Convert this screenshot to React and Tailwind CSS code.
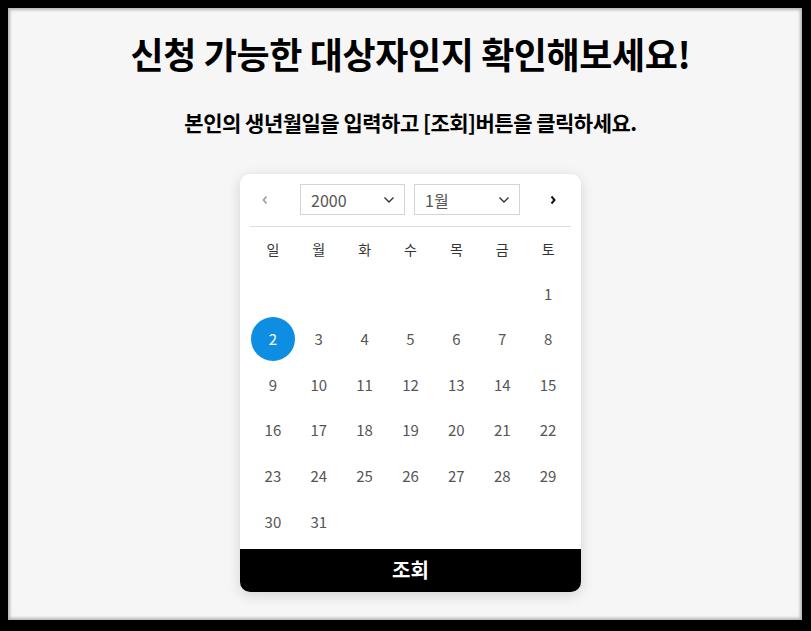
import React from "react";

const font = { fontFamily: '"Noto Sans CJK KR", "Noto Sans", sans-serif' };

const weekdays = ["일", "월", "화", "수", "목", "금", "토"];

// January 2000 starts on Saturday
const cells = [
  ...Array(6).fill(null),
  ...Array.from({ length: 31 }, (_, i) => i + 1),
];
while (cells.length % 7) cells.push(null);

function ChevronDown() {
  return (
    <svg width="12" height="8" viewBox="0 0 12 8" fill="none">
      <path d="M1.5 1.5L6 6L10.5 1.5" stroke="#333" strokeWidth="1.4" />
    </svg>
  );
}

function Select({ value, width }) {
  return (
    <div
      className={`flex h-[31px] items-center justify-between border border-[#d4d4d4] bg-white pl-[10px] pr-[9px] text-[16px] text-[#555] ${width}`}
    >
      <span>{value}</span>
      <ChevronDown />
    </div>
  );
}

export default function App() {
  return (
    <div className="h-[631px] w-full bg-black" style={font}>
      <div className="ml-[8px] mr-[9px] h-[612px] translate-y-[8px] bg-[#f6f6f6] shadow-[inset_0_0_3px_2px_#b5b5b5]">
        <div className="flex flex-col items-center pl-[11px] pt-[21px]">
          <h1 className="text-[36px] font-bold leading-[48px] tracking-[-0.4px] text-black">
            신청 가능한 대상자인지 확인해보세요!
          </h1>
          <p className="mt-[31px] text-[21px] font-bold leading-[28px] tracking-[-0.5px] text-black">
            본인의 생년월일을 입력하고 [조회]버튼을 클릭하세요.
          </p>

          <div className="mt-[38px] w-[341px] overflow-hidden rounded-[10px] bg-white shadow-[0_3px_14px_rgba(0,0,0,0.14)]">
            <div className="px-[10px] pt-[10px]">
              <div className="flex items-center border-b border-[#dcdcdc] pb-[11px]">
                <button className="flex h-[31px] w-[30px] items-center justify-center">
                  <svg width="8" height="10" viewBox="0 0 8 10" fill="none">
                    <path d="M5.5 1.5L2.5 5L5.5 8.5" stroke="#a0a0a0" strokeWidth="1.8" />
                  </svg>
                </button>
                <div className="ml-[20px] flex gap-[9px]">
                  <Select value="2000" width="w-[105px]" />
                  <Select value="1월" width="w-[106px]" />
                </div>
                <button className="ml-auto mr-[8px] flex h-[31px] w-[20px] items-center justify-center">
                  <svg width="8" height="10" viewBox="0 0 8 10" fill="none">
                    <path d="M2.5 1.5L5.5 5L2.5 8.5" stroke="#111" strokeWidth="2" />
                  </svg>
                </button>
              </div>

              <div className="grid grid-cols-7">
                {weekdays.map((d) => (
                  <div
                    key={d}
                    className="flex h-[44px] items-center justify-center text-[14px] text-[#333]"
                  >
                    {d}
                  </div>
                ))}
                {cells.map((n, i) => (
                  <div
                    key={i}
                    className="flex h-[45.6px] items-center justify-center text-[15px] text-[#555]"
                  >
                    {n === 2 ? (
                      <span className="flex h-[44px] w-[44px] items-center justify-center rounded-full bg-[#0d8ee3] text-white">
                        2
                      </span>
                    ) : (
                      n
                    )}
                  </div>
                ))}
              </div>
            </div>
            <button className="mt-[4px] flex h-[43px] w-full items-center justify-center bg-black text-[20px] font-bold text-white">
              조회
            </button>
          </div>
        </div>
      </div>
    </div>
  );
}
